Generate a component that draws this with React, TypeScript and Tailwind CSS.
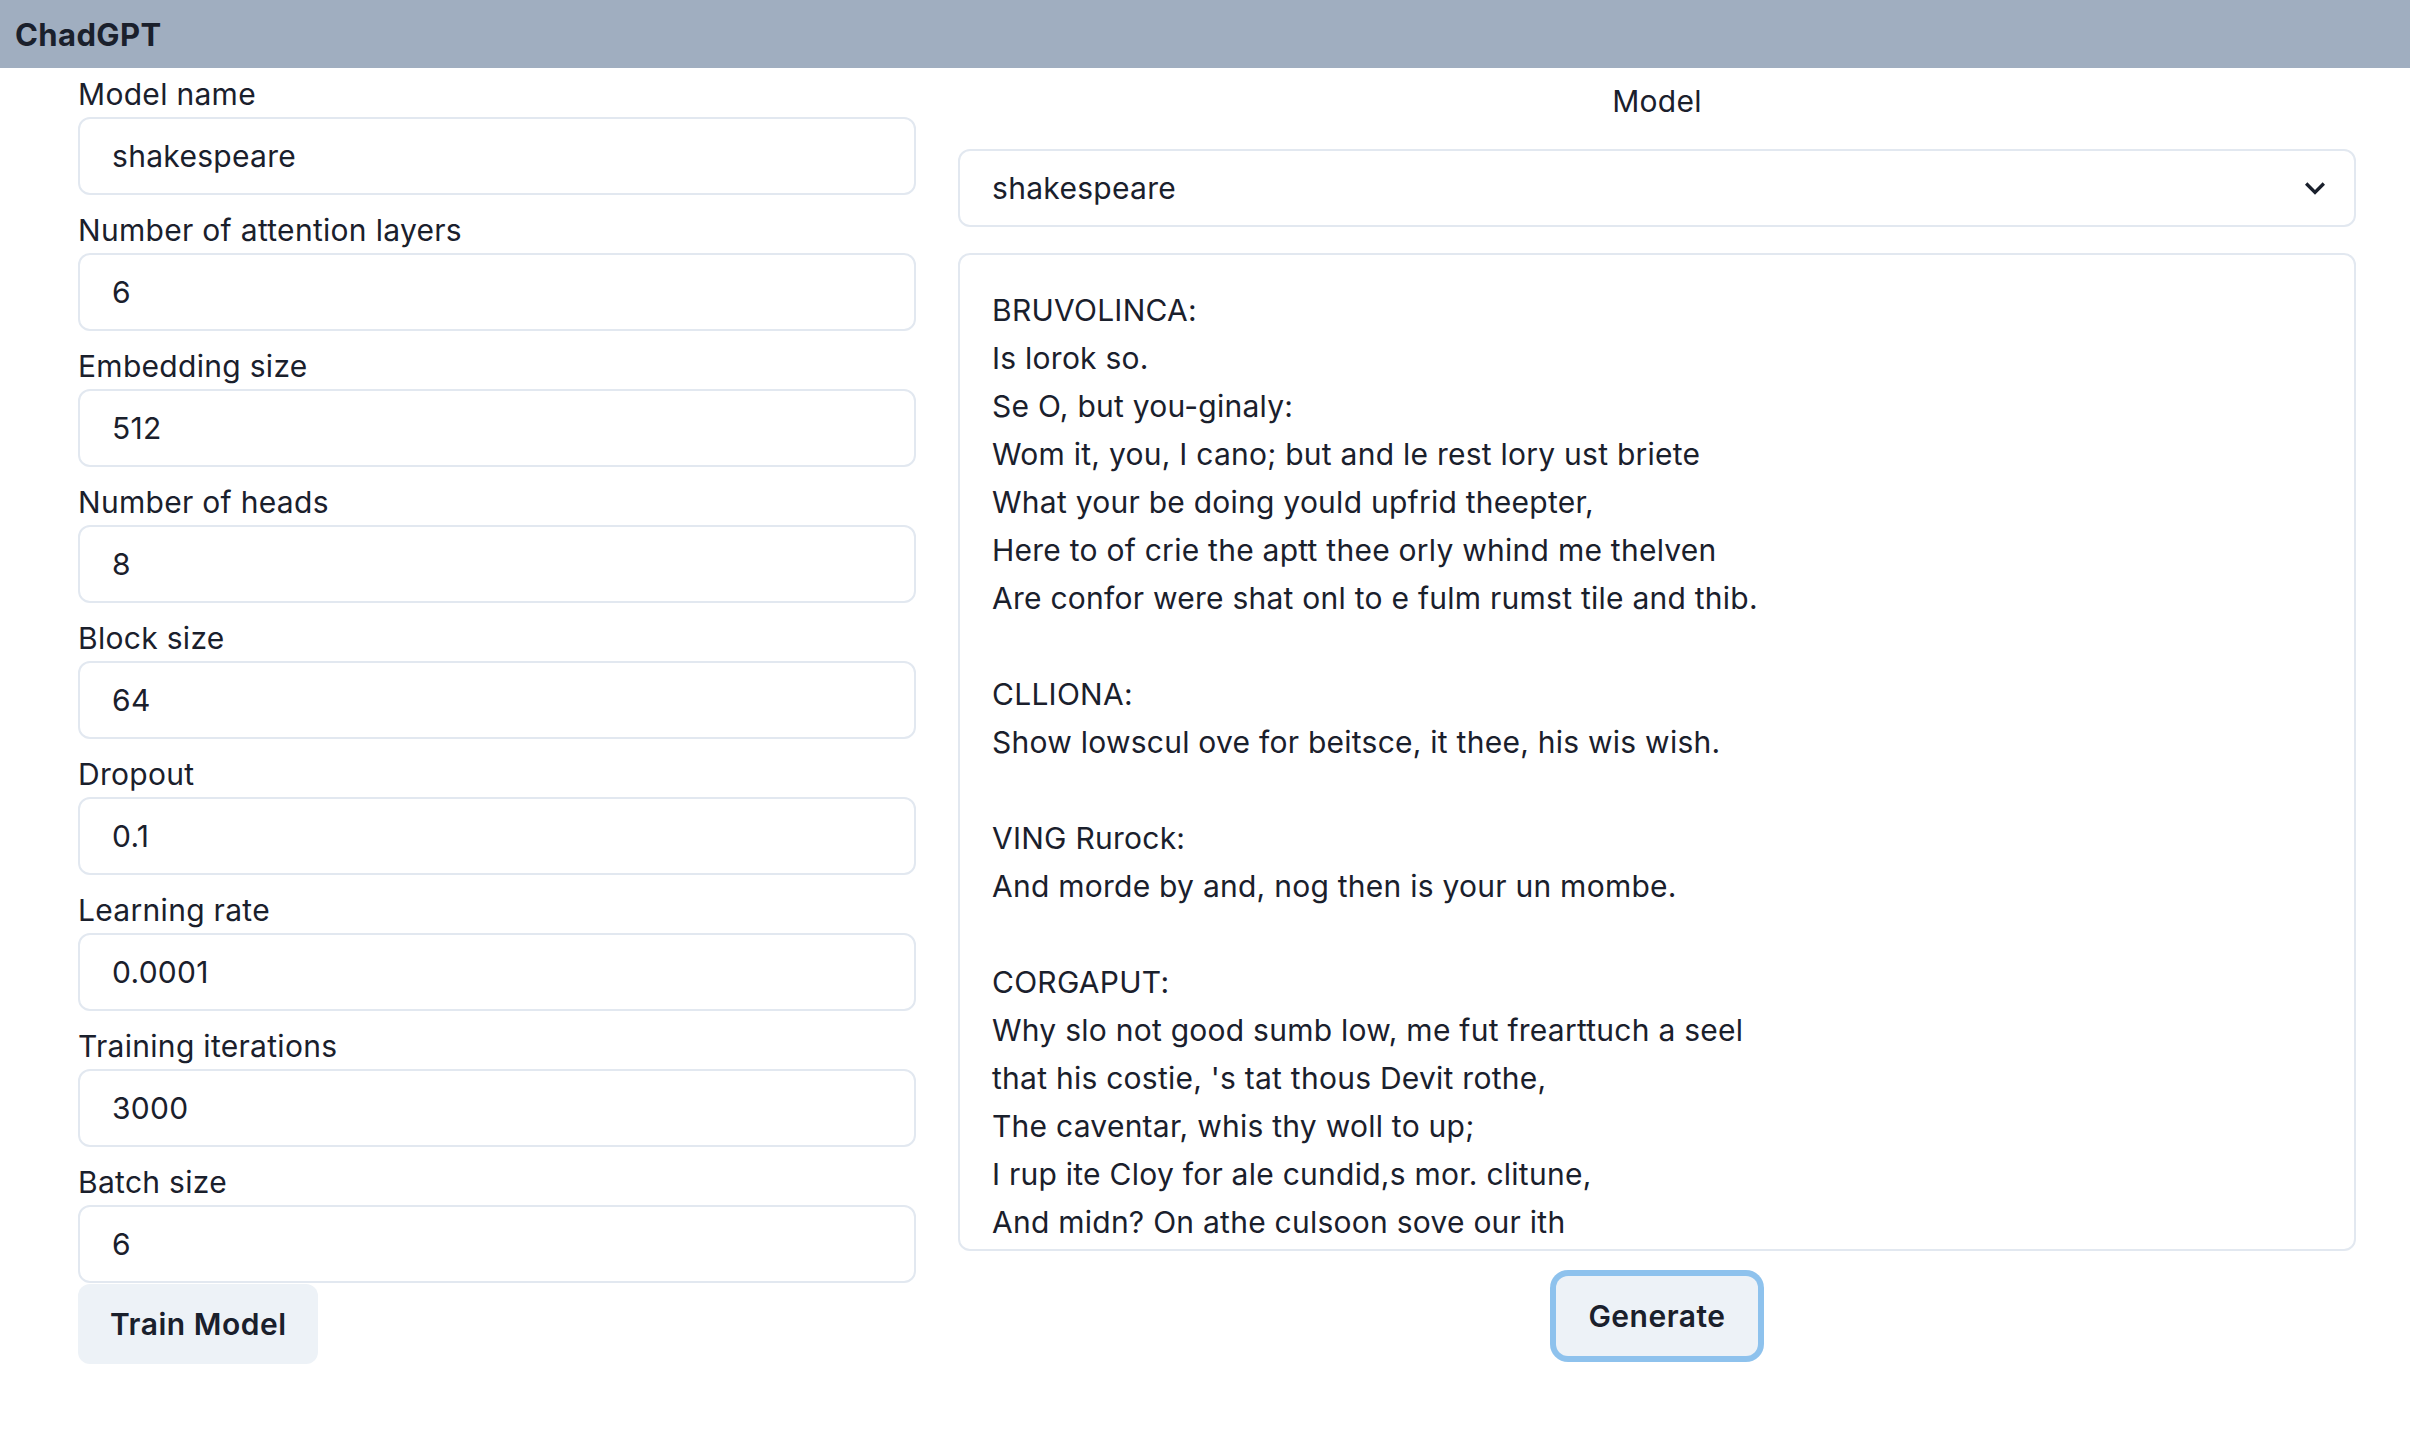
import React from "react";

const fields: { label: string; value: string }[] = [
  { label: "Model name", value: "shakespeare" },
  { label: "Number of attention layers", value: "6" },
  { label: "Embedding size", value: "512" },
  { label: "Number of heads", value: "8" },
  { label: "Block size", value: "64" },
  { label: "Dropout", value: "0.1" },
  { label: "Learning rate", value: "0.0001" },
  { label: "Training iterations", value: "3000" },
  { label: "Batch size", value: "6" },
];

const generated = [
  "BRUVOLINCA:",
  "Is lorok so.",
  "Se O, but you-ginaly:",
  "Wom it, you, I cano; but and le rest lory ust briete",
  "What your be doing yould upfrid theepter,",
  "Here to of crie the aptt thee orly whind me thelven",
  "Are confor were shat onl to e fulm rumst tile and thib.",
  "",
  "CLLIONA:",
  "Show lowscul ove for beitsce, it thee, his wis wish.",
  "",
  "VING Rurock:",
  "And morde by and, nog then is your un mombe.",
  "",
  "CORGAPUT:",
  "Why slo not good sumb low, me fut frearttuch a seel",
  "that his costie, 's tat thous Devit rothe,",
  "The caventar, whis thy woll to up;",
  "I rup ite Cloy for ale cundid,s mor. clitune,",
  "And midn? On athe culsoon sove our ith",
];

export default function App() {
  return (
    <div className="min-h-screen bg-white text-[#1A202C] font-['Inter','Noto_Sans',sans-serif]">
      <header className="h-[68px] bg-[#A0AEC0] flex items-center px-[15px]">
        <span className="text-[31px] font-bold leading-none tracking-[0.4px]">ChadGPT</span>
      </header>
      <div className="flex pl-[78px] pr-[54px] gap-[42px]">
        <div className="w-[838px] shrink-0 pt-[3px] flex flex-col">
          {fields.map((f, i) => (
            <div key={f.label} className={i < fields.length - 1 ? "mb-[12px]" : ""}>
              <label className="block text-[30px] leading-[46px] tracking-[0.3px]">{f.label}</label>
              <input
                readOnly
                value={f.value}
                className="block h-[78px] w-full border-2 border-[#E2E8F0] rounded-[12px] px-[32px] text-[30px] tracking-[0.3px] bg-white outline-none"
              />
            </div>
          ))}
          <button className="mt-[1px] h-[80px] w-fit px-[32px] rounded-[12px] bg-[#EDF2F7] font-semibold text-[30px] tracking-[0.5px]">
            Train Model
          </button>
        </div>
        <div className="flex-1 flex flex-col items-center pt-[10px]">
          <div className="text-[30px] leading-[46px] tracking-[0.3px]">Model</div>
          <div className="mt-[25px] w-full h-[78px] relative border-2 border-[#E2E8F0] rounded-[12px] flex items-center px-[32px] text-[30px] tracking-[0.3px]">
            <span>shakespeare</span>
            <svg
              viewBox="0 0 24 24"
              className="absolute right-[19px] top-1/2 -translate-y-1/2 w-[40px] h-[40px]"
            >
              <path fill="currentColor" d="M16.59 8.59L12 13.17 7.41 8.59 6 10l6 6 6-6z" />
            </svg>
          </div>
          <div className="mt-[26px] w-full h-[998px] border-2 border-[#E2E8F0] rounded-[12px] px-[32px] pt-[31px] overflow-hidden text-[30px] leading-[48px] tracking-[0.25px] whitespace-pre">
            {generated.map((l, i) => (
              <div key={i} className="h-[48px]">
                {l}
              </div>
            ))}
          </div>
          <button className="mt-[25px] h-[80px] px-[32px] rounded-[12px] bg-[#EDF2F7] font-semibold text-[30px] tracking-[0.5px] shadow-[0_0_0_6px_rgba(66,153,225,0.6)]">
            Generate
          </button>
        </div>
      </div>
    </div>
  );
}
